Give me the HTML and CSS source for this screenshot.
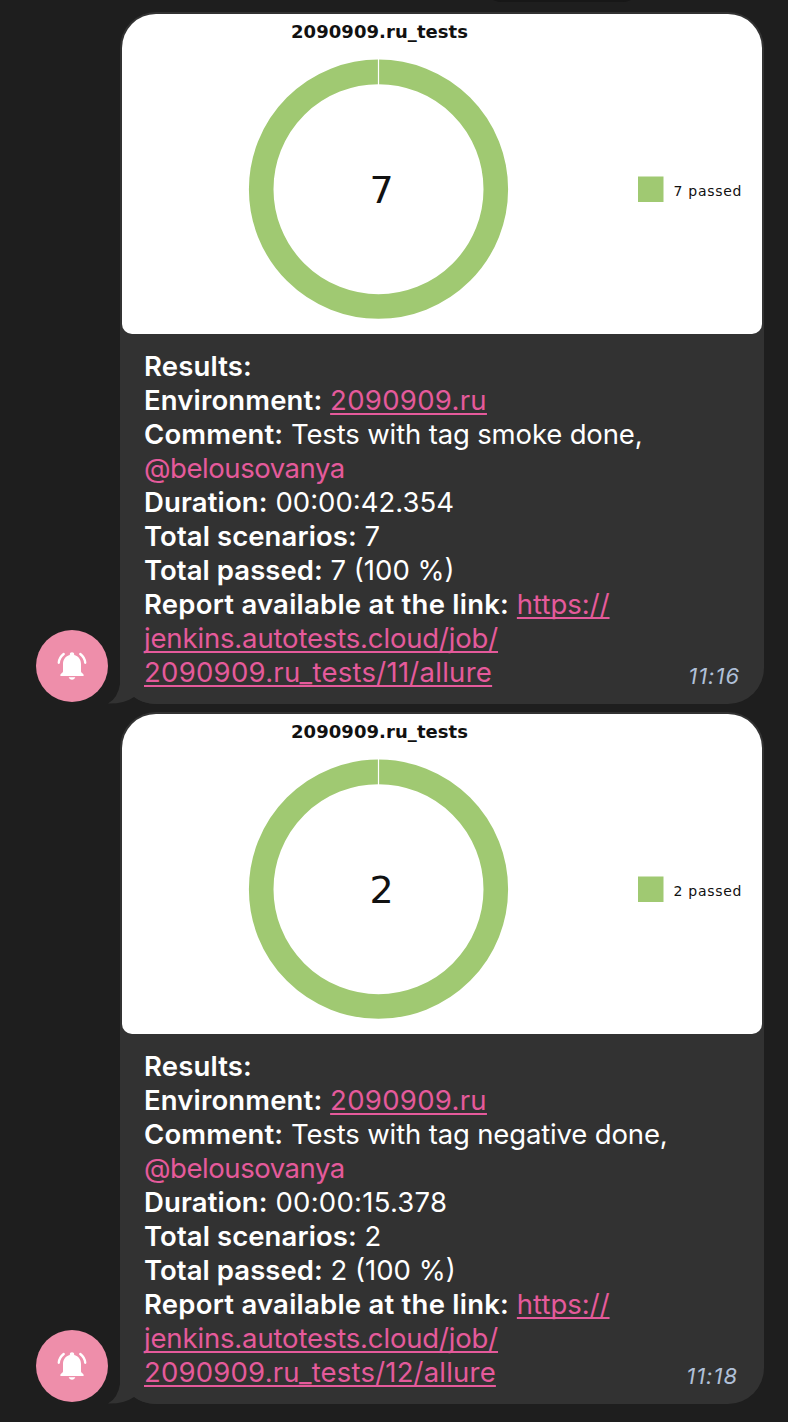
FILE: index.html
```html
<!DOCTYPE html>
<html lang="en">
<head>
<meta charset="utf-8">
<title>Test notifications</title>
<link rel="stylesheet" href="styles.css">
</head>
<body>
<div class="date-pill"></div>
<main class="chat">
  <article class="message">
    <div class="avatar">
      <svg width="72" height="72" viewBox="0 0 72 72"><path fill="#fff" d="M36 22.3c1.300 0 2.200.9 2.200 2.200v.5c4.200 1 6.800 4.500 6.800 9v7.500c0 1.300 2.800 2.200 2.800 3.700 0 .4-.3.700-.8.700H25c-.5 0-.8-.3-.8-.7 0-1.500 2.800-2.400 2.800-3.700V34c0-4.500 2.600-8 6.800-9v-.5c0-1.300.9-2.200 2.200-2.200zM32.700 47.200h6.600c-.5 1.500-1.700 2.500-3.300 2.500s-2.800-1-3.300-2.500z"/><path fill="none" stroke="#fff" stroke-width="2.400" stroke-linecap="round" d="M27.700 24c-2.900 2.200-4.600 5.100-4.900 8.700M44.300 24c2.900 2.200 4.600 5.100 4.900 8.700"/></svg>
    </div>
    <div class="bubble">
      <svg class="tail" width="48" height="44" viewBox="0 0 48 44"><path d="M12 0V24Q10 38 0 43.600Q16 44 26 37Q35 44 48 44V0z"/></svg>
      <svg class="chart" width="640" height="320" viewBox="0 0 640 320">
        <circle cx="256.500" cy="175.200" r="117.300" fill="none" stroke="#a0c972" stroke-width="24.600"/>
        <path d="M256.500 44v27" stroke="#fff" stroke-width="1.200"/>
        <text class="chart-title" x="169" y="23.500" textLength="177">2090909.ru_tests</text>
        <text class="chart-total" x="259.500" y="189" text-anchor="middle">7</text>
        <rect x="516" y="162.500" width="25.500" height="25.500" fill="#a0c972"/>
        <text class="chart-legend" x="551.500" y="182" textLength="68">7 passed</text>
      </svg>
      <div class="body">
        <p><b>Results:</b></p>
        <p><b>Environment:</b> <a class="host">2090909.ru</a></p>
        <p><b>Comment:</b> <span class="comment">Tests with tag smoke done,</span></p>
        <p><a class="mention">@belousovanya</a></p>
        <p><b>Duration:</b> <span>00:00:42.354</span></p>
        <p><b class="scenarios">Total scenarios:</b> <span>7</span></p>
        <p><b class="passed">Total passed:</b> <span>7 (100 %)</span></p>
        <p><b class="report">Report available at the link:</b> <a>https://</a></p>
        <p><a class="job">jenkins.autotests.cloud/job/</a></p>
        <p class="last"><a class="path">2090909.ru_tests/11/allure</a><time>11:16</time></p>
      </div>
    </div>
  </article>
  <article class="message">
    <div class="avatar">
      <svg width="72" height="72" viewBox="0 0 72 72"><path fill="#fff" d="M36 22.3c1.300 0 2.200.9 2.200 2.200v.5c4.200 1 6.800 4.500 6.800 9v7.500c0 1.300 2.800 2.200 2.800 3.700 0 .4-.3.700-.8.700H25c-.5 0-.8-.3-.8-.7 0-1.500 2.800-2.400 2.800-3.700V34c0-4.500 2.600-8 6.800-9v-.5c0-1.300.9-2.200 2.200-2.200zM32.700 47.200h6.600c-.5 1.500-1.700 2.500-3.300 2.500s-2.800-1-3.300-2.500z"/><path fill="none" stroke="#fff" stroke-width="2.400" stroke-linecap="round" d="M27.700 24c-2.900 2.200-4.600 5.100-4.900 8.700M44.300 24c2.900 2.200 4.600 5.100 4.900 8.700"/></svg>
    </div>
    <div class="bubble">
      <svg class="tail" width="48" height="44" viewBox="0 0 48 44"><path d="M12 0V24Q10 38 0 43.600Q16 44 26 37Q35 44 48 44V0z"/></svg>
      <svg class="chart" width="640" height="320" viewBox="0 0 640 320">
        <circle cx="256.500" cy="175.200" r="117.300" fill="none" stroke="#a0c972" stroke-width="24.600"/>
        <path d="M256.500 44v27" stroke="#fff" stroke-width="1.200"/>
        <text class="chart-title" x="169" y="23.500" textLength="177">2090909.ru_tests</text>
        <text class="chart-total" x="259.500" y="189" text-anchor="middle">2</text>
        <rect x="516" y="162.500" width="25.500" height="25.500" fill="#a0c972"/>
        <text class="chart-legend" x="551.500" y="182" textLength="68">2 passed</text>
      </svg>
      <div class="body">
        <p><b>Results:</b></p>
        <p><b>Environment:</b> <a class="host">2090909.ru</a></p>
        <p><b>Comment:</b> <span class="comment">Tests with tag negative done,</span></p>
        <p><a class="mention">@belousovanya</a></p>
        <p><b>Duration:</b> <span class="short">00:00:15.378</span></p>
        <p><b class="scenarios">Total scenarios:</b> <span>2</span></p>
        <p><b class="passed">Total passed:</b> <span>2 (100 %)</span></p>
        <p><b class="report">Report available at the link:</b> <a>https://</a></p>
        <p><a class="job">jenkins.autotests.cloud/job/</a></p>
        <p class="last"><a class="path second">2090909.ru_tests/12/allure</a><time class="second">11:18</time></p>
      </div>
    </div>
  </article>
</main>
</body>
</html>
```
FILE: styles.css
```css
* { box-sizing: border-box; }
body { margin: 0; background: #1e1e1e; font-family: Inter, "Liberation Sans", sans-serif; height: 1422px; overflow: hidden; }
.date-pill { position: absolute; left: 482px; top: -38px; width: 160px; height: 40px; border-radius: 20px; background: #171717; }
.chat { display: flex; flex-direction: column; gap: 8px; padding: 12px 24px 0 36px; }
.message { display: flex; align-items: flex-end; gap: 12px; height: 692px; }
.avatar { width: 72px; height: 72px; border-radius: 50%; background: #ee8eaa; margin-bottom: 2px; }
.avatar svg { display: block; }
.bubble { position: relative; width: 644px; height: 692px; padding: 2px; border-radius: 36px; background: #323232; }
.tail { position: absolute; left: -12px; bottom: 0; fill: #323232; }
.chart { display: block; position: relative; background: #fff; border-radius: 34px 34px 10px 10px; }
.chart text { font-family: "DejaVu Sans", sans-serif; fill: #111; }
.chart .chart-title { font-size: 18px; font-weight: bold; }
.chart .chart-total { font-size: 38px; }
.chart .chart-legend { font-size: 14px; }
.body { position: relative; padding: 15px 22px 0; color: #fff; font-size: 27.5px; line-height: 34px; white-space: nowrap; }
.body p { margin: 0; height: 34px; }
.body b { font-weight: 600; letter-spacing: .15px; }
.body .scenarios { letter-spacing: .08px; }
.body .passed { letter-spacing: .05px; }
.body .report { letter-spacing: .23px; }
.body a { color: #e55a9b; text-decoration: underline; text-decoration-thickness: 2px; text-underline-offset: 3px; text-decoration-skip-ink: none; }
.body .host { letter-spacing: .3px; }
.body .comment { letter-spacing: -.15px; }
.body .mention { text-decoration: none; letter-spacing: -.45px; }
.body .short { letter-spacing: .25px; }
.body .job { letter-spacing: -.16px; }
.body .path { letter-spacing: .27px; }
.body .path.second { letter-spacing: .2px; }
.last { display: flex; justify-content: space-between; }
time { font-size: 22px; font-style: italic; color: #b0c0d8; padding-top: 4px; letter-spacing: 1px; }
time.second { margin-right: 2px; }
```
